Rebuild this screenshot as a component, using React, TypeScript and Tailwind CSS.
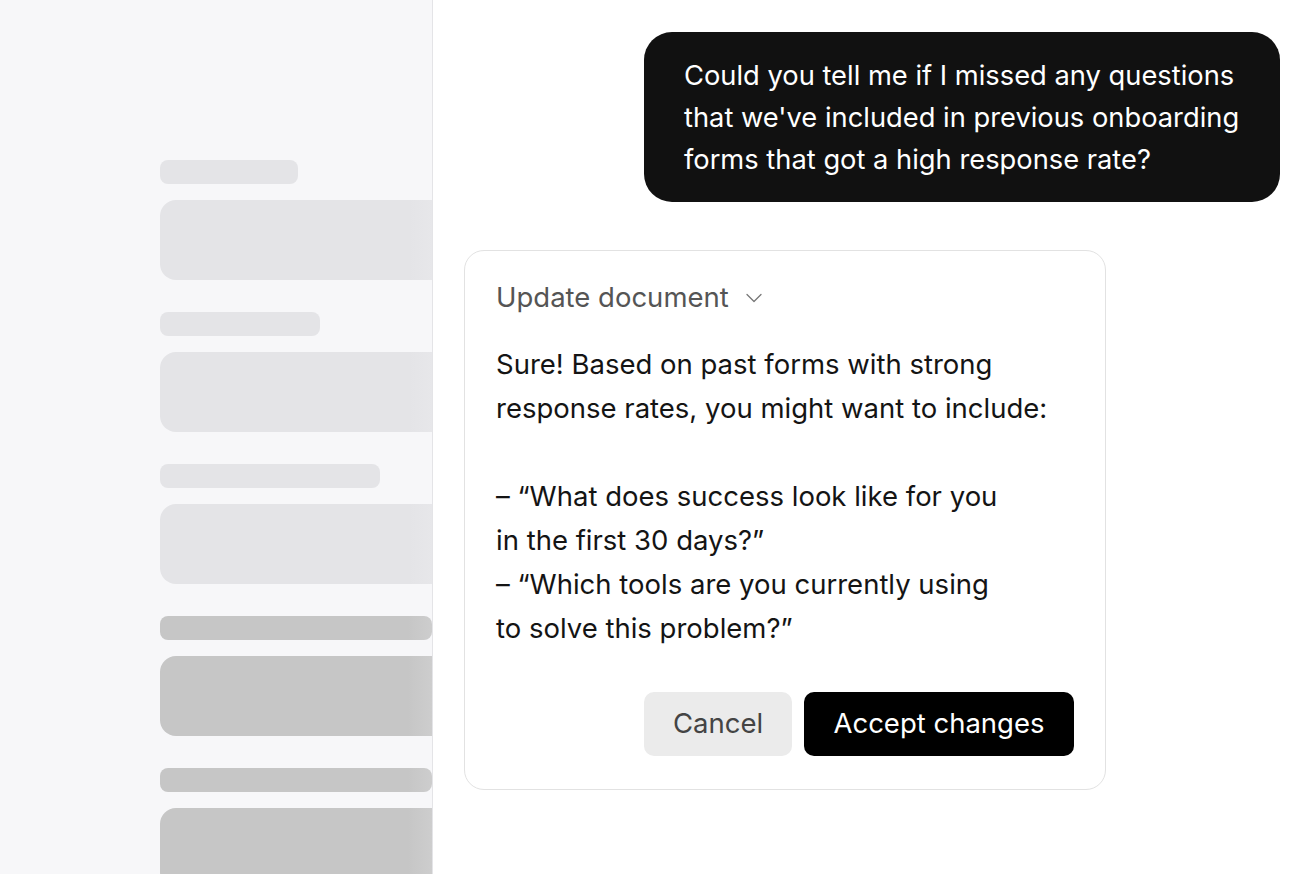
import React from "react";
import { ChevronDown } from "lucide-react";

function Skeleton() {
  const groups = [
    { label: "w-[138px]", tone: "bg-[#e4e4e7]" },
    { label: "w-[160px]", tone: "bg-[#e4e4e7]" },
    { label: "w-[220px]", tone: "bg-[#e4e4e7]" },
    { label: "w-full", tone: "bg-[#c6c6c6]" },
    { label: "w-full", tone: "bg-[#c6c6c6]" },
  ];
  return (
    <div className="relative h-full w-[433px] shrink-0 overflow-hidden border-r border-[#e4e4e7] bg-[#f7f7f9]">
      <div className="flex flex-col gap-8 pl-[160px] pt-[160px]">
        {groups.map((g, i) => (
          <div key={i} className="flex flex-col gap-4">
            <div className={`h-6 rounded-lg ${g.tone} ${g.label}`}></div>
            <div className={`h-20 w-[300px] rounded-2xl ${g.tone}`}></div>
          </div>
        ))}
      </div>
      <div className="pointer-events-none absolute top-0 right-0 h-full w-6 bg-gradient-to-r from-transparent to-[#f7f7f9]/15"></div>
    </div>
  );
}

export default function App() {
  return (
    <div
      className="flex h-[874px] w-[1312px] overflow-hidden bg-white"
      style={{ fontFamily: "Inter, 'Noto Sans', sans-serif" }}
    >
      <Skeleton />
      <div className="flex flex-1 flex-col pt-8 pr-8 pl-[31px]">
        <div className="flex justify-end">
          <div className="w-[636px] rounded-[28px] bg-[#111111] pt-[23px] pb-[21px] pl-10 pr-4 text-[27.3px] leading-[42px] text-white">
            Could you tell me if I missed any questions
            <br />
            that we've included in previous onboarding
            <br />
            forms that got a high response rate?
          </div>
        </div>
        <div className="mt-[48px] w-[642px] rounded-[20px] border border-[#e2e2e2] bg-white pl-[31px] pr-[31px] pt-[27px] pb-[33px]">
          <div className="flex items-center gap-[11px] text-[27.5px] leading-[38px] text-[#555555]">
            Update document
            <ChevronDown size={28} strokeWidth={1.1} className="mt-[2px] text-[#777777]" />
          </div>
          <div className="mt-[26px] text-[27.5px] leading-[44px] text-[#141414]">
            Sure! Based on past forms with strong
            <br />
            response rates, you might want to include:
            <br />
            <br />– “What does success look like for you
            <br />
            in the first 30 days?”
            <br />– “Which tools are you currently using
            <br />
            to solve this problem?”
          </div>
          <div className="mt-[42px] flex justify-end gap-3">
            <button className="h-16 w-[148px] rounded-[10px] bg-[#ebebeb] text-[27.5px] text-[#444444]">Cancel</button>
            <button className="h-16 w-[270px] rounded-[10px] bg-black text-[27.5px] text-white">Accept changes</button>
          </div>
        </div>
      </div>
    </div>
  );
}
